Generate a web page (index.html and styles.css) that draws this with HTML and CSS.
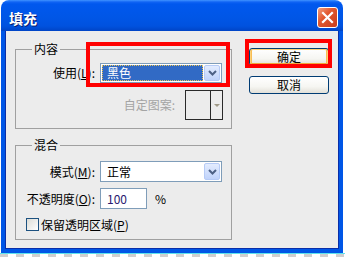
FILE: index.html
```html
<!DOCTYPE html>
<html lang="zh-CN">
<head>
<meta charset="utf-8">
<title>填充</title>
<link rel="stylesheet" href="styles.css">
</head>
<body>
<div class="window">
  <div class="titlebar">
    <span class="title">填充</span>
    <button class="close" aria-label="关闭">
      <svg width="13" height="13" viewBox="0 0 13 13"><path d="M2 2 L11 11 M11 2 L2 11" stroke="#fff" stroke-width="2.2" stroke-linecap="square"/></svg>
    </button>
  </div>
  <div class="client">
    <div class="left">
      <fieldset class="group g1">
        <legend>内容</legend>
        <div class="field">
          <label class="lbl">使用(<u>L</u>):</label>
          <div class="select">
            <span class="val sel">黑色</span>
            <span class="dd"><svg width="9" height="6" viewBox="0 0 9 6"><path d="M1 1 L4.5 4.5 L8 1" fill="none" stroke="#4d6185" stroke-width="2"/></svg></span>
          </div>
        </div>
        <div class="pattern">
          <span class="dim">自定图案:</span>
          <div class="swatch"><span class="sw-main"></span><span class="sw-arrow"><i class="tri"></i></span></div>
        </div>
      </fieldset>
      <fieldset class="group g2">
        <legend>混合</legend>
        <div class="field">
          <label class="lbl">模式(<u>M</u>):</label>
          <div class="select tall">
            <span class="val">正常</span>
            <span class="dd"><svg width="9" height="6" viewBox="0 0 9 6"><path d="M1 1 L4.5 4.5 L8 1" fill="none" stroke="#4d6185" stroke-width="2"/></svg></span>
          </div>
        </div>
        <div class="field f-op">
          <label class="lbl">不透明度(<u>O</u>):</label>
          <div class="num">100</div>
          <span class="pct">%</span>
        </div>
        <div class="check">
          <span class="box"></span>
          <span>保留透明区域(<u>P</u>)</span>
        </div>
      </fieldset>
    </div>
    <div class="right">
      <button class="btn default">确定</button>
      <button class="btn">取消</button>
    </div>
  </div>
  <div class="mark m-select"></div>
  <div class="mark m-ok"></div>
</div>
<div class="floor"></div>
</body>
</html>
```
FILE: styles.css
```css
body {
  margin: 0;
  background: #fff;
  font-family: "Noto Sans CJK SC", "Liberation Sans", sans-serif;
  font-size: 12px;
  line-height: 14px;
  color: #000;
}
.window {
  position: relative;
  margin-left: 1px;
  width: 342px;
  height: 253px;
  display: flex;
  flex-direction: column;
}
.titlebar {
  height: 31px;
  flex: none;
  box-sizing: border-box;
  border-radius: 8px 8px 0 0;
  background: linear-gradient(#3f93ff 0, #1064f4 2px, #0058ee 4px, #0056e6 18px, #0052df 26px, #0044c6 31px);
  display: flex;
  align-items: center;
  padding: 4px 5px 0 8px;
}
.title {
  flex: 1;
  color: #fff;
  font-weight: bold;
  font-size: 14px;
  line-height: 16px;
  text-shadow: 1px 1px #0b1d6e;
}
.close {
  width: 21px;
  height: 21px;
  box-sizing: border-box;
  border: 1px solid #fff;
  border-radius: 3px;
  padding: 0;
  background: linear-gradient(135deg, #f3a080 0, #e2582f 40%, #c83c1c 100%);
  display: flex;
  align-items: center;
  justify-content: center;
}
.client {
  flex: 1;
  background: #ececec;
  border: 4px solid #0056e6;
  border-top: 0;
  box-shadow: inset 1px 0 #0a2ea8, inset -1px 0 #0a2ea8, inset 0 -1px #0a2ea8;
  display: flex;
  gap: 17px;
  padding: 12px 10px 0 10px;
}
.left {
  width: 217px;
  display: flex;
  flex-direction: column;
  gap: 10px;
}
.group {
  margin: 0;
  min-width: 0;
  border: 1px solid #a0a0a0;
  padding: 0 8px 8px 0;
}
.group legend {
  margin-left: 16px;
  padding: 0 2px;
  font-size: 12px;
  line-height: 12px;
  height: 12px;
}
.g1 .field { margin-top: 8px; }
.g2 { padding-bottom: 7px; }
.g2 .field { margin-top: 10px; }
.g2 .f-op { margin-top: 6px; }
.field {
  display: flex;
  align-items: center;
}
.lbl {
  width: 79px;
  margin-right: 5px;
  text-align: right;
  white-space: nowrap;
}
.select {
  width: 122px;
  height: 20px;
  box-sizing: border-box;
  border: 1px solid #7f9db9;
  background: #fff;
  padding: 1px;
  display: flex;
}
.select.tall { height: 21px; }
.val {
  flex: 1;
  padding-left: 5px;
  display: flex;
  align-items: center;
}
.val.sel {
  background: #316ac5;
  color: #fff;
  outline: 1px dotted #e8c458;
  outline-offset: -1px;
  margin-right: 1px;
}
.dd {
  width: 16px;
  box-sizing: border-box;
  border: 1px solid #b6cbf6;
  border-radius: 2px;
  background: linear-gradient(#e3ecfe, #c0d3fb);
  display: flex;
  align-items: center;
  justify-content: center;
}
.pattern {
  margin-top: 7px;
  display: flex;
  justify-content: flex-end;
  align-items: center;
  gap: 10px;
}
.dim { color: #a4a4a4; }
.swatch {
  width: 38px;
  height: 30px;
  box-sizing: border-box;
  border: 1px solid #2a2a2a;
  background: #ececec;
  display: flex;
}
.sw-main { flex: 1; }
.sw-arrow {
  width: 11px;
  border-left: 1px solid #2a2a2a;
  display: flex;
  align-items: center;
  justify-content: center;
}
.tri {
  width: 0;
  height: 0;
  border-left: 3px solid transparent;
  border-right: 3px solid transparent;
  border-top: 3px solid #a09a88;
}
.num {
  width: 47px;
  height: 21px;
  box-sizing: border-box;
  border: 1px solid #7f9db9;
  background: #fff;
  padding-left: 6px;
  color: #2a1a6e;
  display: flex;
  align-items: center;
}
.pct { margin-left: 8px; }
.check {
  margin-top: 8px;
  margin-left: 10px;
  display: flex;
  align-items: center;
  gap: 2px;
  height: 15px;
}
.box {
  width: 13px;
  height: 13px;
  box-sizing: border-box;
  border: 1px solid #1c5180;
  background: linear-gradient(135deg, #dcdcd6, #fff);
}
.right {
  padding-top: 5px;
  display: flex;
  flex-direction: column;
  gap: 10px;
}
.btn {
  width: 80px;
  height: 18px;
  box-sizing: border-box;
  border: 1px solid #003c74;
  border-radius: 3px;
  padding: 0;
  background: linear-gradient(#fff, #f6f6f2 60%, #e2e0d8);
  font: inherit;
  line-height: 16px;
  color: #000;
}
.btn.default {
  box-shadow: inset 0 0 0 1px #fcd27a, inset 0 -2px 0 #f2a63a, inset 2px 0 0 #f8bd55, inset -2px 0 0 #f8bd55;
}
.mark {
  position: absolute;
  box-sizing: border-box;
  border: 4px solid #ff0000;
  pointer-events: none;
}
.m-select { left: 85px; top: 42px; width: 144px; height: 45px; }
.m-ok { left: 244px; top: 39px; width: 87px; height: 29px; }
.floor {
  height: 4px;
  border-top: 1px solid #5fe3ee;
  background: repeating-linear-gradient(90deg, #cfcfcf 0 8px, #fff 8px 16px);
}
```
